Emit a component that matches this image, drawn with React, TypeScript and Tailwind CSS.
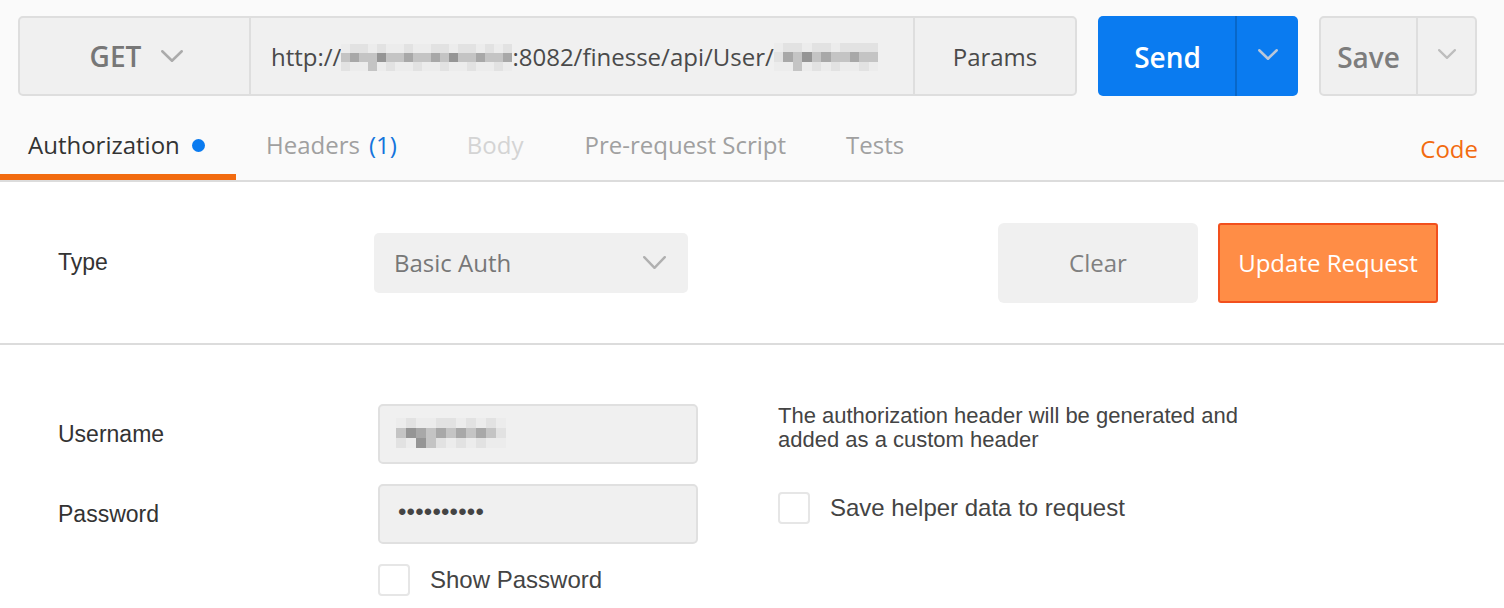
import React from "react";

const Mosaic = ({ rows, cell }: { rows: string[][]; cell: number }) => (
  <span className="inline-flex flex-col align-middle">
    {rows.map((r, i) => (
      <span key={i} className="flex">
        {r.map((c, j) => (
          <span key={j} style={{ width: cell, height: cell, backgroundColor: c }} />
        ))}
      </span>
    ))}
  </span>
);

const L = "#ececec";
const L2 = "#e2e2e2";
const M = "#c4c4c4";
const D = "#a8a8a8";
const D2 = "#959595";

const urlBlur1 = [
  [L, L2, L2, L, L2, L, L, L2, L, L, L2, L2, L, L2, L2, L, L2, L, L2],
  [M, D, M, M, D2, M, M, D, M, M, D, M, D2, M, M, D, M, M, D],
  [L2, L, L, M, L, L2, L, L, L2, L, L, L2, L, L, L2, L, L, L2, L],
];
const urlBlur2 = [
  [L, L2, L2, L, L2, L2, L, L2, L2, L2, L2],
  [L2, D, M, D2, M, D, M, M, D, M, M],
  [L, L, M, L, L2, L, L2, L, L, L2, L],
];
const userBlur = [
  [L, L2, L, L, L2, L2, L, L2, L, L2, L],
  [M, D2, D, M, D, M, D, M, D, M, L2],
  [L2, L, D2, M, L2, L, L2, L, L2, L, L],
];

const Chevron = ({ className, color, w = 22, h = 12, sw = 2.5 }: { className?: string; color: string; w?: number; h?: number; sw?: number }) => (
  <svg className={className} width={w} height={h} viewBox={`0 0 ${w} ${h}`} fill="none">
    <polyline points={`${sw / 2},${sw / 2} ${w / 2},${h - sw / 2} ${w - sw / 2},${sw / 2}`} stroke={color} strokeWidth={sw} strokeLinecap="round" strokeLinejoin="round" />
  </svg>
);

const Checkbox = () => (
  <span className="block w-[32px] h-[32px] rounded-[4px] border-2 border-[#e6e6e6] bg-white shrink-0" />
);

export default function App() {
  return (
    <div className="w-[1504px] h-[608px] overflow-hidden bg-white font-['Open_Sans',sans-serif]">
      {/* Top area */}
      <div className="bg-[#fafafa]">
        <div className="flex px-[18px] pt-[16px] h-[96px]">
          <div className="flex h-[80px] w-[1059px] rounded-[5px] border-2 border-[#dedede] bg-[#f0f0f0]">
            <div className="flex w-[231px] items-center justify-center gap-[20px] border-r-2 border-[#dedede] pl-[4px]">
              <span className="text-[28px] font-semibold text-[#777]">GET</span>
              <Chevron color="#ababab" w={22} h={12} />
            </div>
            <div className="flex flex-1 items-center pl-[20px] pt-[2px] text-[24px] text-[#4a4a4a]">
              <span>http://</span>
              <Mosaic rows={urlBlur1} cell={9} />
              <span>:8082/finesse/api/User/</span>
              <Mosaic rows={urlBlur2} cell={9.5} />
            </div>
            <div className="flex w-[162px] items-center justify-center border-l-2 border-[#dedede] pt-[2px] text-[24px] text-[#4a4a4a]">
              Params
            </div>
          </div>
          <div className="ml-[21px] flex h-[80px] w-[200px] rounded-[5px] bg-[#0a7bf0]">
            <div className="flex w-[139px] items-center justify-center border-r-2 border-[#0867c9] pl-[2px] pt-[2px] text-[28px] font-semibold text-white">
              Send
            </div>
            <div className="flex flex-1 items-center justify-center pb-[3px]">
              <Chevron color="#b9c7da" w={20} h={11} />
            </div>
          </div>
          <div className="ml-[21px] flex h-[80px] w-[158px] rounded-[5px] border-2 border-[#dedede] bg-[#f0f0f0]">
            <div className="flex w-[97px] items-center justify-center border-r-2 border-[#dedede] pt-[2px] text-[28px] font-semibold text-[#7d7d7d]">
              Save
            </div>
            <div className="flex flex-1 items-center justify-center pb-[4px]">
              <Chevron color="#bdbdbd" w={18} h={10} sw={2.2} />
            </div>
          </div>
        </div>

        {/* Tabs */}
        <div className="flex h-[86px] border-b-2 border-[#dcdcdc] text-[24px]">
          <div className="flex w-[236px] items-center border-b-[6px] border-[#f26b0f] pl-[28px] pt-[19px]">
            <span className="text-[#333]">Authorization</span>
            <span className="ml-[12px] mt-[2px] h-[13px] w-[13px] rounded-full bg-[#0a7bf0]" />
          </div>
          <div className="ml-[30px] flex items-center border-b-[6px] border-transparent pt-[19px]">
            <span className="text-[#a0a0a0]">Headers</span>
            <span className="ml-[9px] text-[#1474dc]">(1)</span>
          </div>
          <div className="ml-[70px] flex items-center border-b-[6px] border-transparent pt-[19px] text-[#d4d4d4]">
            Body
          </div>
          <div className="ml-[61px] flex items-center border-b-[6px] border-transparent pt-[19px] text-[#a0a0a0]">
            Pre-request Script
          </div>
          <div className="ml-[60px] flex items-center border-b-[6px] border-transparent pt-[19px] text-[#a0a0a0]">
            Tests
          </div>
          <div className="ml-auto mr-[26px] flex items-center border-b-[6px] border-transparent pt-[28px] text-[#f26b0f]">
            Code
          </div>
        </div>
      </div>

      {/* Type row */}
      <div className="flex h-[163px] items-center border-b-2 border-[#dcdcdc] pl-[58px] pr-[66px]">
        <div className="w-[316px] font-['Liberation_Sans',sans-serif] text-[23px] text-[#333]">Type</div>
        <div className="flex h-[60px] w-[314px] items-center justify-between rounded-[5px] bg-[#f0f0f0] pl-[20px] pr-[22px]">
          <span className="text-[24px] text-[#777]">Basic Auth</span>
          <Chevron color="#b0b0b0" w={23} h={13} sw={2.4} />
        </div>
        <div className="ml-auto flex h-[80px] w-[200px] items-center justify-center rounded-[6px] bg-[#f0f0f0] text-[24px] text-[#808080]">
          Clear
        </div>
        <div className="ml-[20px] flex h-[80px] w-[220px] items-center justify-center rounded-[3px] border-2 border-[#f2501d] bg-[#ff8d46] text-[24px] text-white">
          Update Request
        </div>
      </div>

      {/* Credentials */}
      <div className="flex pl-[58px] pt-[59px] font-['Liberation_Sans',sans-serif]">
        <div className="flex flex-col">
          <div className="flex items-center">
            <div className="w-[320px] text-[23px] text-[#333]">Username</div>
            <div className="flex h-[60px] w-[320px] items-center rounded-[5px] border-2 border-[#e0e0e0] bg-[#f0f0f0] pl-[16px] pb-[2px]">
              <Mosaic rows={userBlur} cell={10} />
            </div>
          </div>
          <div className="mt-[20px] flex items-center">
            <div className="w-[320px] text-[23px] text-[#333]">Password</div>
            <div className="flex h-[60px] w-[320px] items-center rounded-[5px] border-2 border-[#e0e0e0] bg-[#f0f0f0] pl-[18px] pb-[4px]">
              <span className="text-[24px] tracking-[0.2px] text-[#444]">••••••••••</span>
            </div>
          </div>
          <div className="mt-[20px] flex items-center pl-[320px]">
            <Checkbox />
            <span className="ml-[20px] text-[24px] leading-[32px] text-[#444]">Show Password</span>
          </div>
        </div>
        <div className="ml-[80px] flex flex-col">
          <p className="text-[22px] leading-[24px] text-[#444]">
            The authorization header will be generated and
            <br />
            added as a custom header
          </p>
          <div className="mt-[40px] flex items-center">
            <Checkbox />
            <span className="ml-[20px] text-[24px] leading-[32px] text-[#444]">Save helper data to request</span>
          </div>
        </div>
      </div>
    </div>
  );
}
